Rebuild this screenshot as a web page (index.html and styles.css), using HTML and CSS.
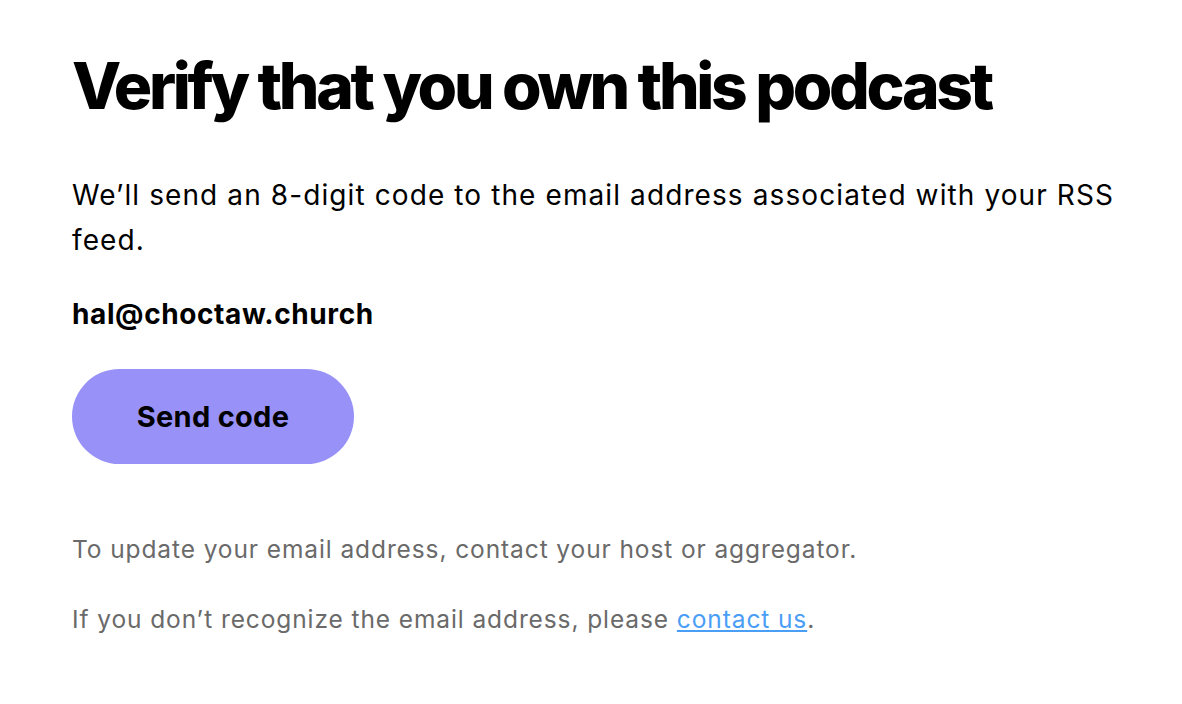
FILE: index.html
```html
<!DOCTYPE html>
<html lang="en">
<head>
<meta charset="utf-8">
<title>Verify that you own this podcast</title>
<link rel="stylesheet" href="styles.css">
</head>
<body>
<main class="page">
  <h1 class="title">Verify that you own this podcast</h1>
  <p class="lead">We’ll send an 8-digit code to the email address associated with your RSS feed.</p>
  <p class="email">hal@choctaw.church</p>
  <button class="send-btn" type="button">Send code</button>
  <p class="note">To update your email address, contact your host or aggregator.</p>
  <p class="note">If you don’t recognize the email address, please <a class="link" href="#">contact us</a>.</p>
</main>
</body>
</html>
```

FILE: styles.css
```css
* { box-sizing: border-box; }
html, body { margin: 0; padding: 0; background: #fff; }
body {
  font-family: Inter, "Liberation Sans", sans-serif;
  color: #000;
}
.page {
  display: flex;
  flex-direction: column;
  align-items: flex-start;
  padding: 46px 60px 0 72px;
}
.title {
  margin: 0;
  font-size: 64px;
  font-weight: 800;
  letter-spacing: -3.3px;
  line-height: 80px;
}
.lead {
  margin: 47px 0 0;
  max-width: 1060px;
  font-size: 28px;
  line-height: 45px;
  font-weight: 400;
  letter-spacing: 1.1px;
}
.email {
  margin: 31px 0 0;
  font-size: 28px;
  line-height: 40px;
  font-weight: 700;
  letter-spacing: 0.6px;
}
.send-btn {
  margin-top: 35px;
  width: 282px;
  height: 95px;
  border: none;
  border-radius: 48px;
  background: #9791f8;
  color: #000;
  font-family: inherit;
  font-size: 29px;
  font-weight: 700;
  letter-spacing: 0.3px;
  cursor: pointer;
}
.note {
  margin: 67px 0 0;
  font-size: 24.5px;
  line-height: 36px;
  letter-spacing: 0.9px;
  color: #6a6a6a;
}
.note + .note { margin-top: 34px; }
.link {
  color: #4a9ef6;
  text-decoration: underline;
}
```
